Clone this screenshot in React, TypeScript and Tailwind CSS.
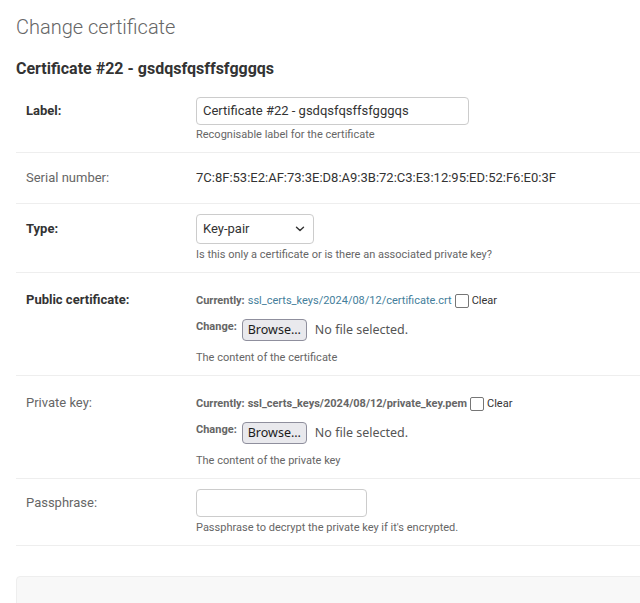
import React from "react";

const rowCls = "flex border-b border-[#eeeeee] py-[10px] pl-[10px]";
const labelReq = "w-[170px] shrink-0 text-[13px] font-bold text-[#333]";
const labelOpt = "w-[170px] shrink-0 text-[13px] text-[#666]";
const help = "text-[11px] leading-[14px] text-[#666]";

function Checkbox() {
  return (
    <span className="inline-block w-[14px] h-[14px] border-[1.5px] border-[#767676] rounded-[2px] bg-white mx-[3px] align-middle" />
  );
}

function FileField({ path, link, helpText }: { path: string; link: boolean; helpText: string }) {
  return (
    <div className="flex flex-col">
      <div className="mt-[10px] flex items-center h-[16px] text-[11px] leading-[16px]">
        <span className="font-bold text-[#666]">Currently:</span>
        {link ? (
          <span className="ml-[3px] text-[#447e9b]">{path}</span>
        ) : (
          <span className="ml-[3px] font-bold text-[#666]">{path}</span>
        )}
        <Checkbox />
        <span className="text-[#333]">Clear</span>
      </div>
      <div className="mt-[10px] flex items-start">
        <span className="text-[11px] leading-[16px] font-bold text-[#666]">Change:</span>
        <span className="ml-[5px] h-[22px] px-[5px] flex items-center border border-[#8f8f9d] rounded-[4px] bg-[#e9e9ed] text-[12.5px] text-[#1b1b1b] font-['Noto_Sans',sans-serif]">
          Browse…
        </span>
        <span className="ml-[8px] h-[22px] flex items-center text-[12.5px] text-[#555] font-['Noto_Sans',sans-serif]">
          No file selected.
        </span>
      </div>
      <div className={"mt-[10px] " + help}>{helpText}</div>
    </div>
  );
}

export default function App() {
  return (
    <div className="w-[640px] h-[603px] overflow-hidden bg-white font-['Roboto',sans-serif] text-[#333]">
      <div className="pl-4 pt-[15px]">
        <h1 className="text-[20px] leading-[24px] font-light text-[#666]">Change certificate</h1>
        <h2 className="mt-[20px] text-[16px] leading-[20px] font-bold text-[#333]">
          Certificate #22 - gsdqsfqsffsfgggqs
        </h2>
        <div className="mt-[8px] w-[700px]">
          <div className={rowCls}>
            <div className={labelReq + " h-[28px] flex items-center"}>Label:</div>
            <div className="flex flex-col">
              <div className="w-[273px] h-[28px] border border-[#cccccc] rounded-[4px] px-[6px] flex items-center text-[13px] text-[#333]">
                Certificate #22 - gsdqsfqsffsfgggqs
              </div>
              <div className={"mt-[3px] " + help}>Recognisable label for the certificate</div>
            </div>
          </div>

          <div className={rowCls}>
            <div className={labelOpt + " h-[30px] pt-[7px] leading-[16px]"}>Serial number:</div>
            <div className="h-[30px] pt-[7px] text-[13px] leading-[16px] text-[#333]">
              7C:8F:53:E2:AF:73:3E:D8:A9:3B:72:C3:E3:12:95:ED:52:F6:E0:3F
            </div>
          </div>

          <div className={rowCls}>
            <div className={labelReq + " h-[30px] flex items-center"}>Type:</div>
            <div className="flex flex-col">
              <div className="w-[118px] h-[30px] border border-[#cccccc] rounded-[4px] pl-[6px] pr-[8px] flex items-center justify-between text-[13px] text-[#333]">
                <span>Key-pair</span>
                <svg width="10" height="6" viewBox="0 0 10 6" fill="none">
                  <path d="M1.5 1.2 L5 4.6 L8.5 1.2" stroke="#333" strokeWidth="1.4" strokeLinecap="round" strokeLinejoin="round" />
                </svg>
              </div>
              <div className={"mt-[4px] " + help}>Is this only a certificate or is there an associated private key?</div>
            </div>
          </div>

          <div className={rowCls}>
            <div className={labelReq + " mt-[9px] leading-[16px]"}>Public certificate:</div>
            <FileField
              path="ssl_certs_keys/2024/08/12/certificate.crt"
              link={true}
              helpText="The content of the certificate"
            />
          </div>

          <div className={rowCls}>
            <div className={labelOpt + " mt-[9px] leading-[16px]"}>Private key:</div>
            <FileField
              path="ssl_certs_keys/2024/08/12/private_key.pem"
              link={false}
              helpText="The content of the private key"
            />
          </div>

          <div className={rowCls}>
            <div className={labelOpt + " h-[28px] flex items-center"}>Passphrase:</div>
            <div className="flex flex-col">
              <div className="w-[171px] h-[28px] border border-[#cccccc] rounded-[4px]" />
              <div className={"mt-[4px] " + help}>Passphrase to decrypt the private key if it's encrypted.</div>
            </div>
          </div>

          <div className="mt-[30px] h-[60px] border border-[#eeeeee] rounded-[4px] bg-[#f8f8f8]" />
        </div>
      </div>
    </div>
  );
}
